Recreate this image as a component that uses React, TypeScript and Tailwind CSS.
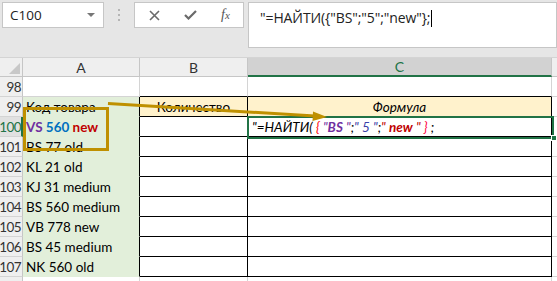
import React from "react";

type Row = { n: number; a?: React.ReactNode; b?: React.ReactNode; c?: React.ReactNode; kind: "plain" | "head" | "data" };

const cellFont = { fontFamily: "Lato, 'Liberation Sans', sans-serif" };

const rows: Row[] = [
  { n: 98, kind: "plain" },
  { n: 99, kind: "head", a: "Код товара", b: "Количество", c: "Формула" },
  {
    n: 100,
    kind: "data",
    a: (
      <span className="font-bold">
        <span className="text-[#7030a0]">VS</span> <span className="text-[#0070c0]">560</span>{" "}
        <span className="text-[#c00000]">new</span>
      </span>
    ),
    c: (
      <span className="italic">
        "=НАЙТИ( <span className="text-[#ff0000]">{"{"}</span>{" "}
        <span className="text-[#7030a0]">
          "<span className="font-bold">BS</span> "
        </span>
        ;<span className="text-[#3b3fa8]">" 5 "</span>;
        <span className="text-[#c00000]">
          " <span className="font-bold">new</span> "
        </span>{" "}
        <span className="text-[#ff0040]">{"}"}</span> ;
      </span>
    ),
  },
  { n: 101, kind: "data", a: "BS 77 old" },
  { n: 102, kind: "data", a: "KL 21 old" },
  { n: 103, kind: "data", a: "KJ 31 medium" },
  { n: 104, kind: "data", a: "BS 560 medium" },
  { n: 105, kind: "data", a: "VB 778 new" },
  { n: 106, kind: "data", a: "BS 45 medium" },
  { n: 107, kind: "data", a: "NK 560 old" },
];

function GridRow({ r }: { r: Row }) {
  const inTable = r.kind !== "plain";
  const active = r.n === 100;
  return (
    <div className="flex h-[20px]">
      <div
        className={
          "w-[23px] h-full flex items-end justify-end pb-[2px] text-[13.5px] tracking-[-0.6px] leading-none border-b border-[#d4d4d4] whitespace-nowrap " +
          (active
            ? "bg-[#e1e1e1] text-[#217346] border-r-2 border-r-[#217346] pr-0"
            : "bg-[#efefef] text-[#333] border-r border-r-[#c6c6c6] pr-[1px]")
        }
        style={cellFont}
      >
        {r.n}
      </div>
      <div
        className={
          "w-[117px] h-full flex items-end pl-[3px] pb-[2px] text-[13.5px] leading-none text-black overflow-visible whitespace-nowrap " +
          (inTable
            ? "bg-[#e2efda] border-r border-r-black border-b border-b-[#e2efda]"
            : "bg-white border-r border-r-[#d4d4d4] border-b border-b-[#d4d4d4]")
        }
        style={cellFont}
      >
        {r.a}
      </div>
      <div
        className={
          "w-[108px] h-full flex items-end justify-center pb-[2px] text-[13.5px] leading-none text-black border-r border-b " +
          (r.kind === "head" ? "bg-[#fff2cc] " : "bg-white ") +
          (inTable || r.n === 98 ? "border-black" : "border-[#d4d4d4]") +
          (r.n === 98 ? " border-r-[#d4d4d4]" : "")
        }
        style={cellFont}
      >
        {r.b}
      </div>
      <div
        className={
          "w-[304px] h-full flex items-end pb-[2px] text-[13.5px] leading-none text-black border-r border-b whitespace-nowrap " +
          (r.kind === "head" ? "bg-[#fff2cc] justify-center italic " : "bg-white pl-[4px] ") +
          (inTable || r.n === 98 ? "border-black" : "border-[#d4d4d4]") +
          (r.n === 98 ? " border-r-[#d4d4d4]" : "")
        }
        style={cellFont}
      >
        {r.c}
      </div>
      <div className="flex-1 h-full bg-white border-b border-[#d4d4d4]" />
    </div>
  );
}

export default function App() {
  return (
    <div className="relative w-[557px] h-[281px] overflow-hidden bg-[#e6e6e6]">
      {/* top bar */}
      <div className="h-[58px] flex items-start pt-[2px] border-b border-[#d4d4d4]" style={{ fontFamily: "'Open Sans', 'Noto Sans', sans-serif" }}>
        <div className="ml-[2px] w-[102px] h-[26px] bg-white border border-[#c6c6c6] flex items-center justify-between pl-[7px] pr-[8px]">
          <span className="text-[13.5px] text-[#222]">C100</span>
          <svg width="8" height="5" viewBox="0 0 8 5">
            <path d="M0 0 H8 L4 4 Z" fill="#777" />
          </svg>
        </div>
        <div className="w-[30px] h-[26px] flex flex-col items-center justify-center gap-[3px]">
          <div className="w-[2px] h-[2px] bg-[#b5b5b5]" />
          <div className="w-[2px] h-[2px] bg-[#b5b5b5]" />
          <div className="w-[2px] h-[2px] bg-[#b5b5b5]" />
        </div>
        <div className="w-[110px] h-[26px] bg-white border border-[#c6c6c6] flex items-center">
          <svg className="ml-[14px]" width="11" height="11" viewBox="0 0 11 11">
            <path d="M1 1 L10 10 M10 1 L1 10" stroke="#6a6a6a" strokeWidth="1.6" />
          </svg>
          <svg className="ml-[24px]" width="13" height="10" viewBox="0 0 13 10">
            <path d="M1 5 L4.5 8.5 L12 1" stroke="#6a6a6a" strokeWidth="2.2" fill="none" />
          </svg>
          <span
            className="ml-[24px] text-[14px] italic text-[#555] leading-none"
            style={{ fontFamily: "'Liberation Serif', serif" }}
          >
            f<span className="text-[11px]">x</span>
          </span>
        </div>
        <div className="ml-[4px] flex-1 h-[46px] bg-white border border-[#c6c6c6] pl-[11px] pt-[2px]">
          <span className="text-[14px] text-[#222] tracking-[-0.1px]">"=НАЙТИ({"{"}"BS";"5";"new"{"}"};</span>
          <span className="inline-block w-[1px] h-[17px] bg-black align-middle ml-[1px]" />
        </div>
      </div>
      {/* column headers */}
      <div className="flex h-[19px]" style={cellFont}>
        <div className="w-[23px] h-full bg-[#efefef] border-r border-b border-[#c6c6c6] relative overflow-hidden">
          <svg className="absolute right-[2px] bottom-[2px]" width="11" height="11" viewBox="0 0 11 11">
            <path d="M11 0 V11 H0 Z" fill="#c8c8c8" />
          </svg>
        </div>
        <div className="w-[117px] h-full bg-[#efefef] border-r border-b border-[#c6c6c6] flex items-center justify-center text-[14px] text-[#333]">A</div>
        <div className="w-[108px] h-full bg-[#efefef] border-r border-b border-[#c6c6c6] flex items-center justify-center text-[14px] text-[#333]">B</div>
        <div className="w-[304px] h-full bg-[#d2d2d2] border-r border-r-[#c6c6c6] border-b-2 border-b-[#217346] flex items-center justify-center text-[14px] text-[#217346]">C</div>
        <div className="flex-1 h-full bg-[#efefef] border-b border-[#c6c6c6]" />
      </div>
      {rows.map((r) => (
        <GridRow key={r.n} r={r} />
      ))}
      <div className="flex h-[10px]">
        <div className="w-[23px] h-full bg-[#efefef] border-r border-[#c6c6c6]" />
        <div className="w-[117px] h-full bg-white border-r border-[#d4d4d4]" />
        <div className="w-[108px] h-full bg-white border-r border-[#d4d4d4]" />
        <div className="w-[304px] h-full bg-white border-r border-[#d4d4d4]" />
        <div className="flex-1 h-full bg-white" />
      </div>

      {/* active cell selection */}
      <div className="absolute left-[247px] top-[116px] w-[307px] h-[23px] border-2 border-[#217346] pointer-events-none" />
      <div className="absolute left-[551px] top-[135px] w-[6px] h-[6px] bg-[#217346] border border-white" />

      {/* annotation */}
      <svg className="absolute left-0 top-0 pointer-events-none" width="557" height="281" viewBox="0 0 557 281">
        <rect x="24.5" y="108.5" width="83" height="41" fill="none" stroke="#bf9000" strokeWidth="3" />
        <line x1="108" y1="103.5" x2="315" y2="116" stroke="#bf9000" strokeWidth="3" />
        <path d="M327 117 L313 111.5 L312.5 121 Z" fill="#bf9000" />
      </svg>
    </div>
  );
}
